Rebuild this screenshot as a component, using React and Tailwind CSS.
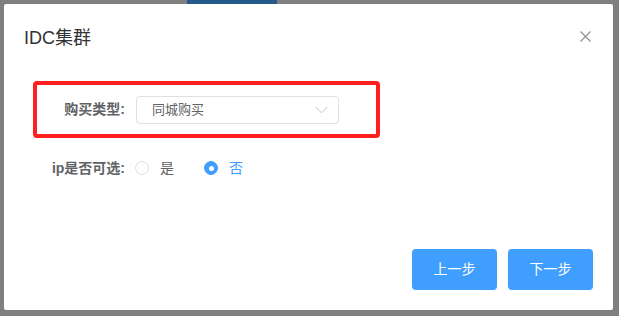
import React from 'react';

const font = { fontFamily: '"Liberation Sans", "Noto Sans CJK SC", sans-serif' };

const Radio = ({ checked, label }) => (
    <label className="flex items-center">
        {checked ? (
            <span className="w-[14px] h-[14px] rounded-full bg-[#409eff] border border-[#409eff] flex items-center justify-center">
                <span className="w-[5px] h-[5px] rounded-full bg-white" />
            </span>
        ) : (
            <span className="w-[14px] h-[14px] rounded-full bg-white border border-[#dcdfe6]" />
        )}
        <span className={`ml-[11px] text-[14px] ${checked ? 'text-[#409eff]' : 'text-[#606266]'}`}>{label}</span>
    </label>
);

const App = () => {
    return (
        <div className="w-[619px] h-[316px] bg-[#7f7f7f] overflow-hidden flex flex-col" style={font}>
            <div className="h-[4px] flex">
                <div className="ml-[187px] w-[90px] h-[4px] bg-[#25598a]" />
            </div>

            <div className="ml-[4px] w-[609px] h-[306px] bg-white rounded-[2px] flex flex-col">
                <div className="flex items-center justify-between pt-[22px] pl-[20px] pr-[22px]">
                    <span className="text-[18px] leading-[24px] text-[#303133]">IDC集群</span>
                    <svg width="11" height="11" viewBox="0 0 11 11" className="mt-[-4px]">
                        <path d="M0.5 0.5 L10.5 10.5 M10.5 0.5 L0.5 10.5" stroke="#909399" strokeWidth="1.2" />
                    </svg>
                </div>

                <div className="ml-[29px] mt-[31px] w-[347px] h-[57px] border-4 border-[#ff1f1f] rounded-[4px] flex items-center">
                    <span className="w-[88px] text-right text-[14px] font-semibold text-[#606266]">购买类型:</span>
                    <div className="ml-[11px] w-[203px] h-[28px] border border-[#dcdfe6] rounded-[4px] flex items-center justify-between pl-[15px] pr-[10px]">
                        <span className="text-[13px] text-[#606266]">同城购买</span>
                        <svg width="13" height="8" viewBox="0 0 13 8">
                            <polyline points="0.5,0.8 6.5,6.8 12.5,0.8" fill="none" stroke="#c0c4cc" strokeWidth="1" />
                        </svg>
                    </div>
                </div>

                <div className="ml-[33px] mt-[20px] h-[20px] flex items-center">
                    <span className="w-[88px] text-right text-[14px] font-semibold text-[#606266]">ip是否可选:</span>
                    <div className="ml-[10px] flex items-center gap-[30px]">
                        <Radio label="是" />
                        <Radio checked label="否" />
                    </div>
                </div>

                <div className="mt-auto flex justify-end gap-[11px] pr-[20px] pb-[20px]">
                    <button className="w-[85px] h-[41px] rounded-[4px] bg-[#409eff] text-white text-[14px]">上一步</button>
                    <button className="w-[85px] h-[41px] rounded-[4px] bg-[#409eff] text-white text-[14px]">下一步</button>
                </div>
            </div>
        </div>
    );
};

export default App;
